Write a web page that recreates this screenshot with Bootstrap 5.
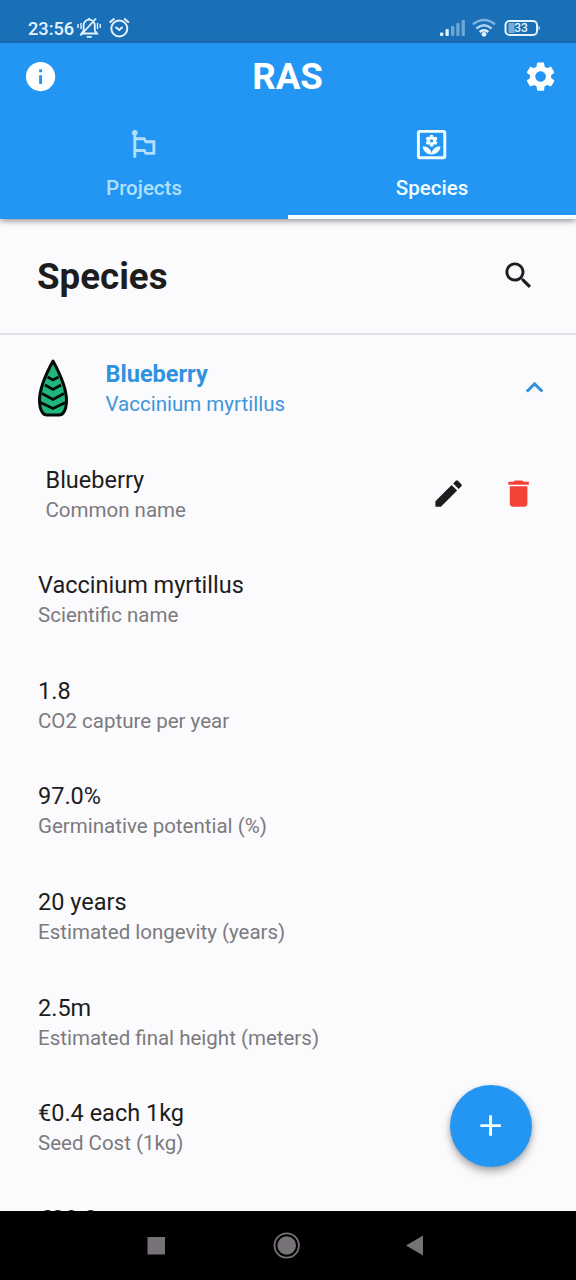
<!DOCTYPE html>
<html lang="en">
<head>
<meta charset="utf-8">
<meta name="viewport" content="width=device-width, initial-scale=1">
<title>RAS</title>
<link href="https://cdn.jsdelivr.net/npm/bootstrap@5.3.0/dist/css/bootstrap.min.css" rel="stylesheet">
<style>
body{font-family:Roboto,sans-serif;background:#fbfafd;color:#1d1d20;height:1280px;overflow:hidden}
.statusbar{height:43px;background:#1a70b7;color:#e4f3ff;padding:15px 35px 0 28px;font-size:18.2px;font-weight:500;line-height:28px}
.statusbar svg{margin-top:1px}
.topbar{background:#2396f4;height:176px;box-shadow:0 2px 6px rgba(0,0,0,.42);z-index:2;position:relative}
.titlebar{height:67px;padding:0 17.4px 0 23.4px}
.apptitle{font-size:36.7px;font-weight:700;line-height:44px;margin-right:7px}
.mi{width:35.2px;height:35.2px;fill:currentColor;display:block;flex:none}
.tabitem{height:109px;padding-top:16.6px;font-size:20.5px;font-weight:500;line-height:26px;color:#b0e0fd;border:0;border-bottom:4px solid transparent;border-radius:0;background:none;gap:12.8px}
.tabitem.active{color:#f3fcff;border-bottom-color:#f7fdff}
.pagehead{height:116px;padding:0 39.6px 0 37px;border-bottom:2px solid #e1e0e4}
.pagehead h1{font-size:36.7px;font-weight:700;line-height:44px;padding-top:1px}
.tile{height:105.6px;padding-left:38px}
.tile-title{font-size:23.5px;line-height:30px;padding-top:3.4px}
.tile-sub{font-size:20.5px;line-height:31px;color:#7b7b7e}
.tile-last{padding-top:20.5px}
.accent{color:#3092dd}
.tile-accent .tile-title{font-weight:700}
.tile-accent .tile-sub{color:#3d96da}
.fab{position:absolute;right:44px;bottom:44px;width:82px;height:82px;background:#2396f4;color:#f4fcff;box-shadow:0 5px 9px rgba(0,0,0,.3),0 1px 4px rgba(0,0,0,.12)}
.sysnav{height:69px;background:#000}
.bin{color:#f44336}
</style>
</head>
<body class="d-flex flex-column">
<div class="statusbar d-flex align-items-start flex-shrink-0">
  <span>23:56</span>
  <svg width="54" height="24" viewBox="76 16 54 24" fill="none" stroke="currentColor" stroke-width="1.8" style="margin-left:2px">
    <path d="M81.500 33.500h15.500l-2.200-3v-5.200a5.600 5.600 0 0 0-11.200 0v5.200zM89.200 19.500v-1.500M80.500 35.500l15.500-17M86.800 36.800h5"/>
    <path d="M78 24v4M81 23v6M97.500 23v6M100.300 24v4" stroke-width="1.400"/>
    <circle cx="119.300" cy="28.500" r="8" stroke-width="2"/>
    <path d="M115.500 27l3.700 3 3.400-3M109.700 22.600l4.800-4M128.900 22.600l-4.800-4" stroke-width="2"/>
  </svg>
  <svg class="ms-auto" width="102" height="24" viewBox="439 16 102 24" fill="currentColor">
    <rect x="440" y="32.500" width="3.300" height="3.500" rx="1"/><rect x="445.500" y="29" width="3.300" height="7" rx="1"/>
    <g opacity=".42"><rect x="451" y="26" width="3.300" height="10" rx="1"/><rect x="456.300" y="23" width="3.300" height="13" rx="1"/><rect x="461.600" y="20" width="3.300" height="16" rx="1"/></g>
    <g fill="none" stroke="currentColor" stroke-width="2.400"><path d="M473 24.300q11-8.500 22 0" opacity=".5"/><path d="M476.400 28.500q7.600-6.500 15.200 0" opacity=".75"/><path d="M479.700 32q4.300-3.500 8.600 0"/></g>
    <circle cx="484" cy="34.300" r="2.400"/>
    <rect x="505.500" y="21" width="31.500" height="14" rx="4" fill="none" stroke="currentColor" stroke-width="2"/>
    <path d="M508.500 23h6v10h-6z" opacity=".45"/><path d="M538.600 25.500q2.400 2.500 0 5z"/>
    <text x="521" y="32.300" font-size="12" font-weight="500" text-anchor="middle">33</text>
  </svg>
</div>

<header class="topbar text-white flex-shrink-0">
  <div class="titlebar d-flex align-items-center justify-content-between">
    <svg class="mi" viewBox="0 0 24 24"><path d="M12 2C6.480 2 2 6.480 2 12s4.480 10 10 10 10-4.480 10-10S17.520 2 12 2zm1 15h-2v-6h2v6zm0-8h-2V7h2v2z"/></svg>
    <span class="apptitle">RAS</span>
    <svg class="mi" viewBox="0 0 24 24"><path d="M19.140 12.940c.04-.3.06-.61.06-.94 0-.32-.02-.64-.07-.94l2.030-1.580c.18-.14.23-.41.12-.61l-1.920-3.320c-.12-.22-.37-.29-.59-.22l-2.390.96c-.5-.38-1.030-.7-1.620-.94L14.400 2.810c-.04-.24-.24-.41-.48-.41h-3.840c-.24 0-.43.17-.47.41L9.250 5.350C8.660 5.590 8.120 5.920 7.630 6.290L5.240 5.330c-.22-.08-.47 0-.59.22L2.740 8.870C2.620 9.080 2.660 9.340 2.860 9.480l2.030 1.580C4.840 11.360 4.800 11.690 4.800 12s.02.64.07.94l-2.030 1.580c-.18.14-.23.41-.12.61l1.920 3.320c.12.22.37.29.59.22l2.390-.96c.5.38 1.030.7 1.620.94l.36 2.540c.05.24.24.41.48.41h3.840c.24 0 .44-.17.47-.41l.36-2.540c.59-.24 1.130-.56 1.620-.94l2.390.96c.22.08.47 0 .59-.22l1.920-3.320c.12-.22.07-.47-.12-.61zM12 15.600c-1.980 0-3.600-1.620-3.600-3.600s1.620-3.600 3.600-3.600 3.600 1.620 3.600 3.600-1.620 3.600-3.600 3.600z"/></svg>
  </div>
  <nav class="nav nav-fill d-flex">
    <button class="tabitem w-50 d-flex flex-column align-items-center">
      <svg class="mi" viewBox="0 0 24 24"><path d="M14 9l-1-2H7V5.720C7.600 5.380 8 4.740 8 4c0-1.100-.9-2-2-2s-2 .9-2 2c0 .74.4 1.380 1 1.720V21h2v-4h5l1 2h7V9zM18 17h-4l-1-2H7V9h5l1 2h5z"/></svg>
      <span>Projects</span>
    </button>
    <button class="tabitem active w-50 d-flex flex-column align-items-center">
      <svg class="mi" viewBox="0 0 24 24">
        <rect x="3" y="3" width="18" height="18" rx="1" fill="none" stroke="currentColor" stroke-width="2"/>
        <path d="M12 18.700c3.500 0 6-2.400 6-5.500-3.300 0-6 2.200-6 5.500zM12 18.700c0-3.300-2.700-5.500-6-5.500 0 3.100 2.500 5.500 6 5.500z"/>
        <circle cx="12" cy="9.400" r="1.950" fill="none" stroke="currentColor" stroke-width="1.700"/>
        <circle cx="12" cy="6.600" r="1.350"/><circle cx="12" cy="12.200" r="1.350"/><circle cx="9.500" cy="8" r="1.350"/><circle cx="14.500" cy="8" r="1.350"/><circle cx="9.500" cy="10.800" r="1.350"/><circle cx="14.500" cy="10.800" r="1.350"/>
      </svg>
      <span>Species</span>
    </button>
  </nav>
</header>

<main class="flex-grow-1 overflow-hidden position-relative">
  <div class="pagehead d-flex align-items-center justify-content-between">
    <h1 class="m-0">Species</h1>
    <svg class="mi" viewBox="0 0 24 24"><path d="M15.500 14h-.79l-.28-.27C15.410 12.590 16 11.110 16 9.500 16 5.910 13.090 3 9.500 3S3 5.910 3 9.500 5.910 16 9.500 16c1.610 0 3.090-.59 4.230-1.570l.27.28v.79l5 4.990L20.490 19l-4.990-5zm-6 0C7.010 14 5 11.990 5 9.500S7.010 5 9.500 5 14 7.010 14 9.500 11.990 14 9.500 14z"/></svg>
  </div>
  <div class="tile tile-accent accent d-flex align-items-center" style="padding-right:23.400px">
    <svg width="30" height="60" viewBox="0 0 30 60" class="flex-shrink-0" style="margin-right:37.500px">
      <path d="M15 3C9 14 1.500 30 1.500 42.500c0 6 1.500 10 3 12q1.500 2.500 4.500 2.500h12q3 0 4.500-2.500c1.500-2 3-6 3-12C28.500 30 21 14 15 3z" fill="#1fb77b" stroke="#050b08" stroke-width="3" stroke-linejoin="round"/>
      <path d="M9.500 19l5.500 3 5.500-3M7 27l8 4.500 8-4.500M4 35.500l11 6 11-6M2.500 44.500l12.500 6 12.500-6" fill="none" stroke="#050b08" stroke-width="2.700"/>
    </svg>
    <div><div class="tile-title">Blueberry</div><div class="tile-sub">Vaccinium myrtillus</div></div>
    <svg class="mi ms-auto" viewBox="0 0 24 24"><path d="M12 8l-6 6 1.410 1.410L12 10.830l4.590 4.580L18 14z"/></svg>
  </div>
  <div class="tile d-flex align-items-center" style="padding-left:45.500px;padding-right:39.600px">
    <div><div class="tile-title">Blueberry</div><div class="tile-sub">Common name</div></div>
    <svg class="mi ms-auto" viewBox="0 0 24 24"><path d="M3 17.250V21h3.750L17.810 9.940l-3.750-3.750zM20.710 7.040c.39-.39.39-1.020 0-1.410l-2.340-2.340a.996.996 0 0 0-1.410 0l-1.830 1.830 3.750 3.750z"/></svg>
    <svg class="mi bin" viewBox="0 0 24 24" style="margin-left:35.200px"><path d="M6 19c0 1.100.9 2 2 2h8c1.100 0 2-.9 2-2V7H6zM19 4h-3.500l-1-1h-5l-1 1H5v2h14z"/></svg>
  </div>
  <div class="tile d-flex flex-column justify-content-center"><div class="tile-title">Vaccinium myrtillus</div><div class="tile-sub">Scientific name</div></div>
  <div class="tile d-flex flex-column justify-content-center"><div class="tile-title">1.8</div><div class="tile-sub">CO2 capture per year</div></div>
  <div class="tile d-flex flex-column justify-content-center"><div class="tile-title">97.0%</div><div class="tile-sub">Germinative potential (%)</div></div>
  <div class="tile d-flex flex-column justify-content-center"><div class="tile-title">20 years</div><div class="tile-sub">Estimated longevity (years)</div></div>
  <div class="tile d-flex flex-column justify-content-center"><div class="tile-title">2.5m</div><div class="tile-sub">Estimated final height (meters)</div></div>
  <div class="tile d-flex flex-column justify-content-center"><div class="tile-title">€0.4 each 1kg</div><div class="tile-sub">Seed Cost (1kg)</div></div>
  <div class="tile tile-last"><div class="tile-title">€20.0</div></div>
  <button class="fab btn rounded-circle p-0 border-0 d-flex align-items-center justify-content-center" aria-label="Add">
    <svg class="mi" viewBox="0 0 24 24"><path d="M19 13h-6v6h-2v-6H5v-2h6V5h2v6h6z"/></svg>
  </button>
</main>

<footer class="sysnav flex-shrink-0">
  <svg width="576" height="69" viewBox="0 0 576 69" fill="#767277" class="d-block">
    <rect x="147.500" y="26" width="17.500" height="17.500"/>
    <circle cx="286.700" cy="34.500" r="9.300"/><circle cx="286.700" cy="34.500" r="12.200" fill="none" stroke="#767277" stroke-width="1.800"/>
    <path d="M406 34.500l17-10v20z"/>
  </svg>
</footer>
<script src="https://cdn.jsdelivr.net/npm/bootstrap@5.3.0/dist/js/bootstrap.bundle.min.js"></script>
</body>
</html>
